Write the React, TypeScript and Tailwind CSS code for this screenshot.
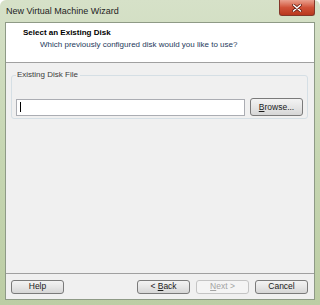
const font = { fontFamily: '"Liberation Sans", Arial, sans-serif' };

function Btn({ label, disabled, h = 'h-[14px]' }: { label: React.ReactNode; disabled?: boolean; h?: string }) {
  return (
    <div
      className={
        'flex w-[53px] items-center justify-center rounded-[3px] border text-[8.5px] leading-none ' +
        h +
        ' ' +
        (disabled
          ? 'border-[#c4c4c4] bg-[#f4f4f4] text-[#a3a3a3]'
          : 'border-[#7a7a7a] bg-gradient-to-b from-[#f3f3f3] via-[#e6e6e6] to-[#d6d6d6] text-[#1a1a1a]')
      }
    >
      {label}
    </div>
  );
}

export default function App() {
  return (
    <div
      className="relative h-[305px] w-[320px] overflow-hidden rounded-t-[6px] bg-gradient-to-b from-[#d6e1c8] via-[#c6d6b2] to-[#bccda4]"
      style={font}
    >
      {/* title bar */}
      <div className="flex h-[22px] items-center pl-[6px] pt-[2px] text-[9px] text-[#1e1e1e]">
        New Virtual Machine Wizard
      </div>
      <div className="absolute left-[279px] top-0 flex h-[16px] w-[36px] items-center justify-center rounded-b-[3px] border border-t-0 border-[#84372a] bg-gradient-to-b from-[#e9a08e] via-[#d05238] to-[#b9371d]">
        <svg width="10" height="8" viewBox="0 0 10 8">
          <path d="M1.5 1 L8.5 7 M8.5 1 L1.5 7" stroke="#6a2216" strokeWidth="3" strokeLinecap="round" />
          <path d="M1.5 1 L8.5 7 M8.5 1 L1.5 7" stroke="#ffffff" strokeWidth="1.5" strokeLinecap="round" />
        </svg>
      </div>

      {/* client area */}
      <div className="mx-[5px] flex h-[278px] flex-col border border-[#8e9a86] bg-[#f0f0f0]">
        <div className="h-[40px] border-b border-[#a0a0a0] bg-white">
          <div className="pl-[17px] pt-[5px] text-[8px] font-bold leading-[10px] text-black">
            Select an Existing Disk
          </div>
          <div className="mt-[2px] pl-[34px] text-[8px] leading-[10px] text-[#1e395b]">
            Which previously configured disk would you like to use?
          </div>
        </div>

        <div className="flex-1 pl-[5px] pr-[6px] pt-[12px]">
          <div className="relative h-[44px] rounded-[3px] border border-[#d5dfe5]">
            <div className="absolute -top-[6px] left-[4px] bg-[#f0f0f0] pl-[1px] pr-[2px] text-[8px] leading-[10px] text-[#3c3c3c]">
              Existing Disk File
            </div>
            <div className="flex items-center gap-[5px] pl-[4px] pt-[22px]">
              <div className="flex h-[17px] w-[229px] items-center border border-[#abadb3] bg-white pl-[3px]">
                <div className="h-[10px] w-px bg-black" />
              </div>
              <Btn
                h="h-[18px]"
                label={
                  <span>
                    <span className="underline">B</span>rowse...
                  </span>
                }
              />
            </div>
          </div>
        </div>

        <div className="flex h-[26px] items-center border-t border-[#a0a0a0] pl-[5px] pr-[6px]">
          <Btn label="Help" />
          <div className="flex-1" />
          <div className="flex gap-[6px]">
            <Btn
              label={
                <span>
                  &lt; <span className="underline">B</span>ack
                </span>
              }
            />
            <Btn
              disabled
              label={
                <span>
                  <span className="underline">N</span>ext &gt;
                </span>
              }
            />
            <Btn label="Cancel" />
          </div>
        </div>
      </div>
    </div>
  );
}
